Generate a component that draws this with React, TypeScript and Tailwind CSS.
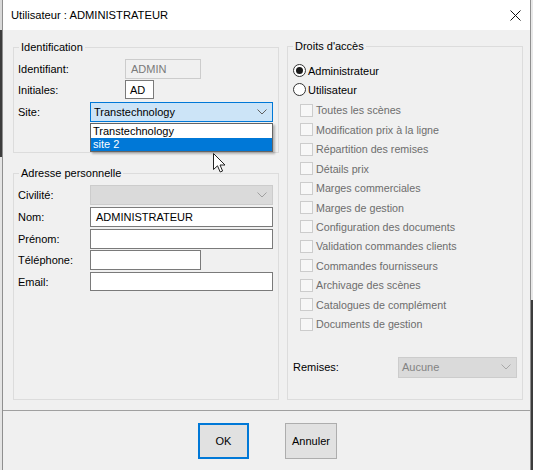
import React from 'react';

const font = { fontFamily: '"Liberation Sans", Arial, sans-serif' };

function Chevron({ color = '#606060' }: { color?: string }) {
  return (
    <svg width="10" height="6" viewBox="0 0 10 6" fill="none">
      <polyline points="0.5 0.5 5 5 9.5 0.5" stroke={color} strokeWidth="1" />
    </svg>
  );
}

function Checkbox({ label }: { label: string }) {
  return (
    <div className="h-[19.45px] flex items-center pl-[12px] gap-[3px]">
      <span className="w-[13px] h-[13px] border border-[#cccccc] bg-[#f7f7f7] shrink-0" />
      <span className="text-[#6d6d6d] text-[10.7px]">{label}</span>
    </div>
  );
}

function Radio({ label, checked }: { label: string; checked?: boolean }) {
  return (
    <div className="h-[19px] flex items-center pl-[5px] gap-[2px]">
      <span className="w-[13px] h-[13px] rounded-full border border-[#333333] bg-white flex items-center justify-center shrink-0">
        {checked && <span className="w-[7px] h-[7px] rounded-full bg-[#1a1a1a]" />}
      </span>
      <span>{label}</span>
    </div>
  );
}

const rights = [
  'Toutes les scènes',
  'Modification prix à la ligne',
  'Répartition des remises',
  'Détails prix',
  'Marges commerciales',
  'Marges de gestion',
  'Configuration des documents',
  'Validation commandes clients',
  'Commandes fournisseurs',
  'Archivage des scènes',
  'Catalogues de complément',
  'Documents de gestion',
];

export default function App() {
  return (
    <div className="relative w-[533px] h-[470px] flex overflow-hidden text-[11px] text-black leading-[16px]" style={font}>
      {/* background behind the dialog, left */}
      <div className="w-[2px] flex flex-col">
        <div className="h-[30px] bg-[#d9d9d9]" />
        <div className="h-[127px] bg-[#3c3c3c]" />
        <div className="flex-1 bg-[#e4e4e4]" />
      </div>

      {/* Dialog window */}
      <div className="w-[529px] flex flex-col bg-[#f0f0f0] border-x border-[#8f8f8f]">
        {/* Title bar */}
        <div className="h-[30px] bg-white flex items-center justify-between pl-[8px] pr-[9px] shrink-0">
          <span className="text-[11.2px]">Utilisateur : ADMINISTRATEUR</span>
          <svg width="11" height="11" viewBox="0 0 11 11">
            <line x1="0.5" y1="0.5" x2="10.5" y2="10.5" stroke="#111" strokeWidth="1" />
            <line x1="10.5" y1="0.5" x2="0.5" y2="10.5" stroke="#111" strokeWidth="1" />
          </svg>
        </div>

        {/* Body */}
        <div className="flex gap-[8px] pl-[10px] pt-[8px] pb-[10px]">
          {/* Left column */}
          <div className="w-[266px] flex flex-col mt-[1px]">
            {/* Identification */}
            <fieldset className="h-[114px] border border-[#dcdcdc] px-[4px]">
              <legend className="ml-[1px] px-[2px] leading-[16px]">Identification</legend>
              <div className="mt-[4px] h-[20px] flex items-center">
                <span className="w-[107px]">Identifiant:</span>
                <div className="w-[76px] h-[20px] border border-[#cccccc] bg-[#f0f0f0] text-[#7a7a7a] flex items-center pl-[5px]">ADMIN</div>
              </div>
              <div className="mt-[1px] h-[19px] flex items-center">
                <span className="w-[107px]">Initiales:</span>
                <div className="w-[29px] h-[19px] border border-[#7a7a7a] bg-white flex items-center pl-[4px]">AD</div>
              </div>
              <div className="mt-[3px] h-[20px] flex items-center">
                <span className="w-[72px]">Site:</span>
                <div className="relative w-[183px] h-[20px]">
                  <div className="h-full border border-[#0078d7] bg-[#cce4f7] flex items-center justify-between pl-[3px] pr-[5px]">
                    <span>Transtechnology</span>
                    <Chevron />
                  </div>
                  {/* Open dropdown list */}
                  <div className="absolute left-0 top-[21px] w-[183px] border border-[#646464] bg-white shadow-[2px_2px_2px_rgba(0,0,0,0.25)] z-10">
                    <div className="h-[14px] flex items-center pl-[2px] leading-[14px]">Transtechnology</div>
                    <div className="h-[13px] flex items-center pl-[2px] bg-[#0078d7] text-white leading-[13px]">site 2</div>
                  </div>
                </div>
              </div>
            </fieldset>

            {/* Adresse personnelle */}
            <fieldset className="mt-[12px] h-[235px] border border-[#dcdcdc] px-[4px]">
              <legend className="ml-[1px] px-[2px] leading-[16px]">Adresse personnelle</legend>
              <div className="mt-[4px] h-[20px] flex items-center">
                <span className="w-[72px]">Civilité:</span>
                <div className="w-[183px] h-[20px] border border-[#cccccc] bg-[#dadada] flex items-center justify-end pr-[5px]">
                  <Chevron color="#a0a0a0" />
                </div>
              </div>
              <div className="mt-[2px] h-[20px] flex items-center">
                <span className="w-[72px]">Nom:</span>
                <div className="w-[183px] h-[20px] border border-[#7a7a7a] bg-white flex items-center pl-[5px]">ADMINISTRATEUR</div>
              </div>
              <div className="mt-[2px] h-[20px] flex items-center">
                <span className="w-[72px]">Prénom:</span>
                <div className="w-[183px] h-[20px] border border-[#7a7a7a] bg-white" />
              </div>
              <div className="mt-[1px] h-[20px] flex items-center">
                <span className="w-[72px]">Téléphone:</span>
                <div className="w-[111px] h-[20px] border border-[#7a7a7a] bg-white" />
              </div>
              <div className="mt-[2px] h-[19px] flex items-center">
                <span className="w-[72px]">Email:</span>
                <div className="w-[183px] h-[19px] border border-[#7a7a7a] bg-white" />
              </div>
            </fieldset>
          </div>

          {/* Right column: Droits d'accès */}
          <fieldset className="w-[236px] h-[362px] border border-[#dcdcdc]">
            <legend className="ml-[5px] px-[2px] leading-[16px]">Droits d'accès</legend>
            <div className="mt-[7px]">
              <Radio label="Administrateur" checked />
              <Radio label="Utilisateur" />
            </div>
            <div className="mt-[1.6px]">
              {rights.map(r => (
                <Checkbox key={r} label={r} />
              ))}
            </div>
            <div className="mt-[23px] h-[21px] flex items-center pl-[5px]">
              <span className="w-[105px]">Remises:</span>
              <div className="w-[119px] h-[21px] border border-[#cccccc] bg-[#dadada] flex items-center justify-between pl-[3px] pr-[5px] text-[#838383]">
                <span>Aucune</span>
                <Chevron color="#a8a8a8" />
              </div>
            </div>
          </fieldset>
        </div>

        {/* Footer */}
        <div className="flex-1 border-t border-[#a0a0a0] pt-[12px] pl-[195px] flex items-start gap-[36px]">
          <button className="w-[51px] h-[36px] border-2 border-[#0078d7] bg-[#e1e1e1] text-[11px]">OK</button>
          <button className="w-[52px] h-[36px] border border-[#adadad] bg-[#e1e1e1] text-[11px]">Annuler</button>
        </div>
      </div>

      {/* background behind the dialog, right */}
      <div className="w-[2px] flex flex-col">
        <div className="h-[300px] bg-[#e8e8e8]" />
        <div className="flex-1 bg-[#3c3c3c]" />
      </div>

      {/* Mouse cursor */}
      <svg className="absolute left-[213px] top-[153px] z-20" width="13" height="20" viewBox="0 0 13 20">
        <path d="M0.5 0.5 L0.5 16.5 L4.5 12.8 L7.2 19 L9.6 18 L7 12 L12 12 Z" fill="white" stroke="#222" strokeWidth="1" strokeLinejoin="round" />
      </svg>
    </div>
  );
}
